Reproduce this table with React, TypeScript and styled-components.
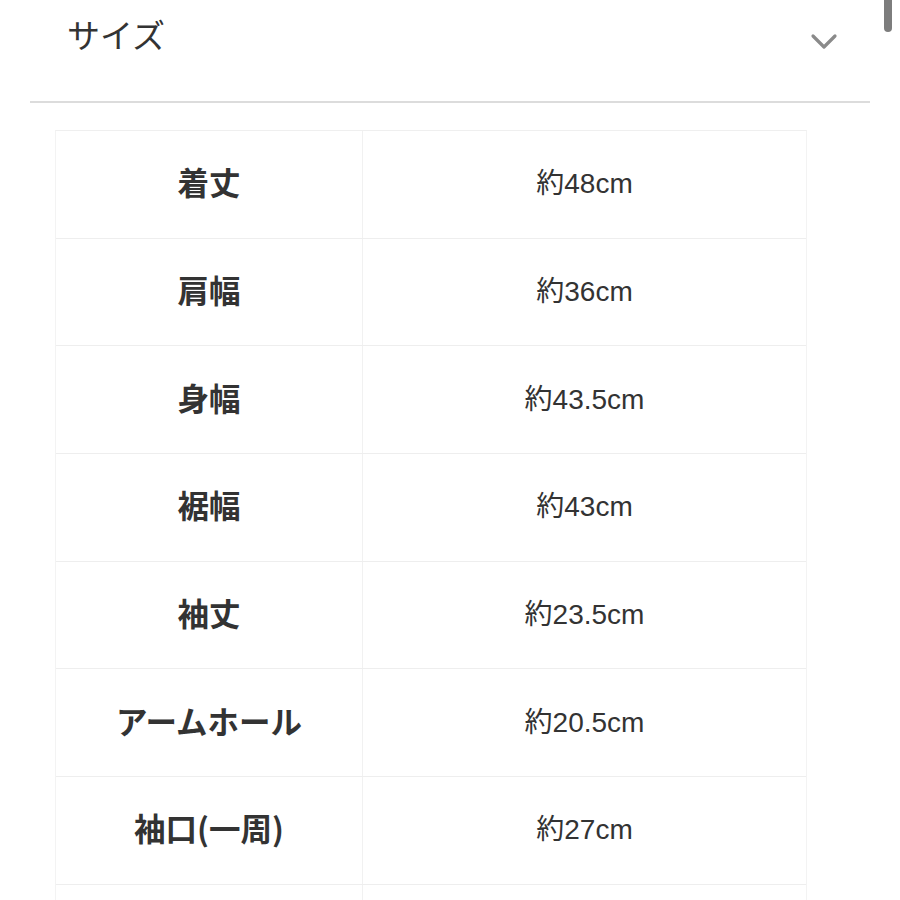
import React from "react";
import styled, { createGlobalStyle } from "styled-components";

const Global = createGlobalStyle`
  html, body { margin: 0; padding: 0; background: #fff; height: 900px; overflow: hidden; }
  body { font-family: "Noto Sans CJK JP", "Liberation Sans", sans-serif; color: #333; }
`;

const Page = styled.div`
  position: relative;
  width: 900px;
  height: 900px;
  overflow: hidden;
`;

const Header = styled.div`
  display: flex;
  align-items: center;
  justify-content: space-between;
  height: 76px;
  margin: 0 30px;
  padding: 0 32px 0 37px;
`;

const Title = styled.h2`
  margin: 0 0 8px;
  font-size: 33px;
  font-weight: 400;
  color: #333;
  line-height: 1;
`;

const Chevron = styled.svg`
  width: 28px;
  height: 18px;
  margin-top: 8px;
`;

const Divider = styled.div`
  margin: 25px 30px 0;
  height: 2px;
  background: #dcdcdc;
`;

const Table = styled.div`
  margin: 27px 0 0 55px;
  width: 750px;
  border-top: 1px solid #efefef;
  border-left: 1px solid #f3f3f3;
  border-right: 1px solid #f3f3f3;
`;

const Row = styled.div`
  display: grid;
  grid-template-columns: 307px 1fr;
  height: 107.7px;
  box-sizing: border-box;
  border-bottom: 1px solid #eeeeee;
`;

const Label = styled.div`
  display: flex;
  align-items: center;
  justify-content: center;
  padding-bottom: 6px;
  border-right: 1px solid #f1f1f1;
  font-size: 31.5px;
  font-weight: 700;
  color: #333;
`;

const Value = styled.div`
  display: flex;
  align-items: center;
  justify-content: center;
  padding-bottom: 6px;
  font-size: 28px;
  font-weight: 400;
  color: #333;
  font-family: "Liberation Sans", "Noto Sans CJK JP", sans-serif;
`;

const Thumb = styled.div`
  position: absolute;
  top: -6px;
  right: 8px;
  width: 8px;
  height: 38px;
  border-radius: 4px;
  background: #7d7d7d;
`;

const rows: [string, string][] = [
  ["着丈", "約48cm"],
  ["肩幅", "約36cm"],
  ["身幅", "約43.5cm"],
  ["裾幅", "約43cm"],
  ["袖丈", "約23.5cm"],
  ["アームホール", "約20.5cm"],
  ["袖口(一周)", "約27cm"],
  ["", ""],
];

export default function App() {
  return (
    <Page>
      <Global />
      <Header>
        <Title>サイズ</Title>
        <Chevron viewBox="0 0 28 18" fill="none">
          <path d="M3 3 L14 14 L25 3" stroke="#8a8a8a" strokeWidth="3.2" strokeLinecap="round" strokeLinejoin="round" />
        </Chevron>
      </Header>
      <Divider />
      <Table>
        {rows.map(([l, v], i) => (
          <Row key={i}>
            <Label>{l}</Label>
            <Value>{v}</Value>
          </Row>
        ))}
      </Table>
      <Thumb />
    </Page>
  );
}
